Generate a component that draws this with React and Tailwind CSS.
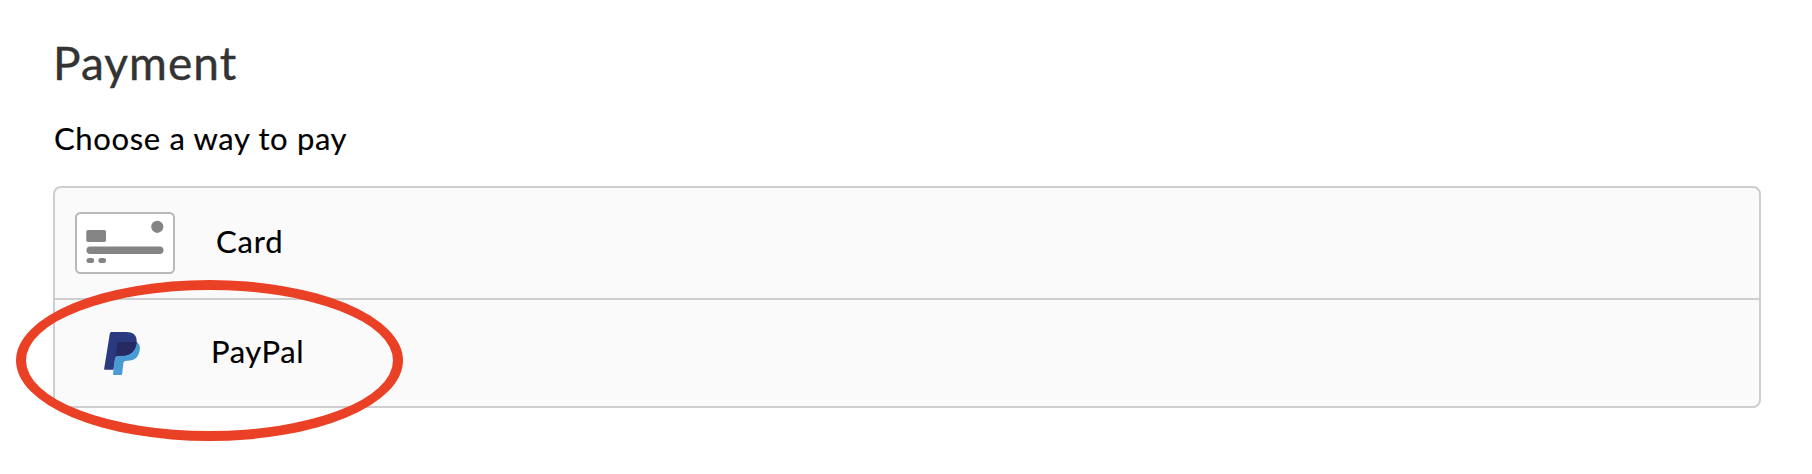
import React from 'react';

function CardIcon() {
  return (
    <svg width="100" height="62" viewBox="0 0 100 62" className="shrink-0">
      <rect x="1" y="1" width="98" height="60" rx="4.5" fill="#fff" stroke="#b8b8b8" strokeWidth="2" />
      <circle cx="82.3" cy="14.8" r="6.1" fill="#848484" />
      <rect x="11.3" y="18" width="19.7" height="12" rx="1.8" fill="#848484" />
      <rect x="11.5" y="34.5" width="77" height="7.4" rx="3.7" fill="#848484" />
      <rect x="11.5" y="46" width="7.6" height="5" rx="2.5" fill="#848484" />
      <rect x="23.4" y="46" width="7.6" height="5" rx="2.5" fill="#848484" />
    </svg>
  );
}

function PayPalIcon() {
  return (
    <svg width="36" height="43" viewBox="0 0 36 43" className="shrink-0">
      <path d="M15.3 10H32.7C35 11.7 36.3 14 35.9 17C34.8 25.5 30.5 28.5 23.6 28.8C20.3 28.9 19.7 29.5 19.3 32L18.2 41.5C18.1 42.5 17.6 43 16.7 43H10C9.2 43 8.8 42.5 9 41.7L11.2 25.8Z" fill="#4a9ad4" />
      <path d="M7.8 0H22C29 0 33 3 32.7 9.5C32 19 26.5 23.6 18.5 23.7H14C12.2 23.7 11.4 24.5 11.1 26.2L9.5 37.7H1.1C.4 37.7 0 37.2.2 36.4L5.8 1.7C6 .6 6.7 0 7.8 0Z" fill="#2b3980" />
      <path d="M15 10H32.7C31.9 19 26.5 23.6 18.5 23.7H14C12.4 23.7 11.6 24.4 11.2 25.8L13.3 11.6C13.5 10.5 14 10 15 10Z" fill="#252b60" />
    </svg>
  );
}

function App() {
  return (
    <div className="relative h-[474px] w-full overflow-hidden bg-white px-[53px] pt-[35px] font-['Lato','Liberation_Sans',sans-serif] font-normal text-black [-webkit-text-stroke-width:0.15px]">
      <h1 className="h-[56px] text-[46px] leading-[56px] tracking-[1.05px] text-[#333] [-webkit-text-stroke-width:0.4px]">Payment</h1>
      <h2 className="mt-[27px] h-[40px] pl-px text-[31px] leading-[40px] tracking-[0.65px]">Choose a way to pay</h2>

      <div className="mt-[28px] mr-[-2px] h-[222px] rounded-[8px] border-2 border-[#cecece] bg-[#fafafa]">
        <div className="flex h-[112px] items-center border-b-2 border-[#cecece] pl-[20px]">
          <CardIcon />
          <span className="ml-[41px] pb-[4px] text-[31px] leading-[40px] tracking-[0.8px]">Card</span>
        </div>
        <div className="flex h-[106px] items-center pl-[49px]">
          <PayPalIcon />
          <span className="ml-[71px] pb-[4px] text-[31px] leading-[40px] tracking-[0.6px]">PayPal</span>
        </div>
      </div>

      {/* highlight ring around the PayPal option */}
      <div className="pointer-events-none absolute top-[280px] left-[16px] h-[161px] w-[387px] rounded-[50%] border-10 border-[#ea4025]"></div>
    </div>
  );
}

export default App;
